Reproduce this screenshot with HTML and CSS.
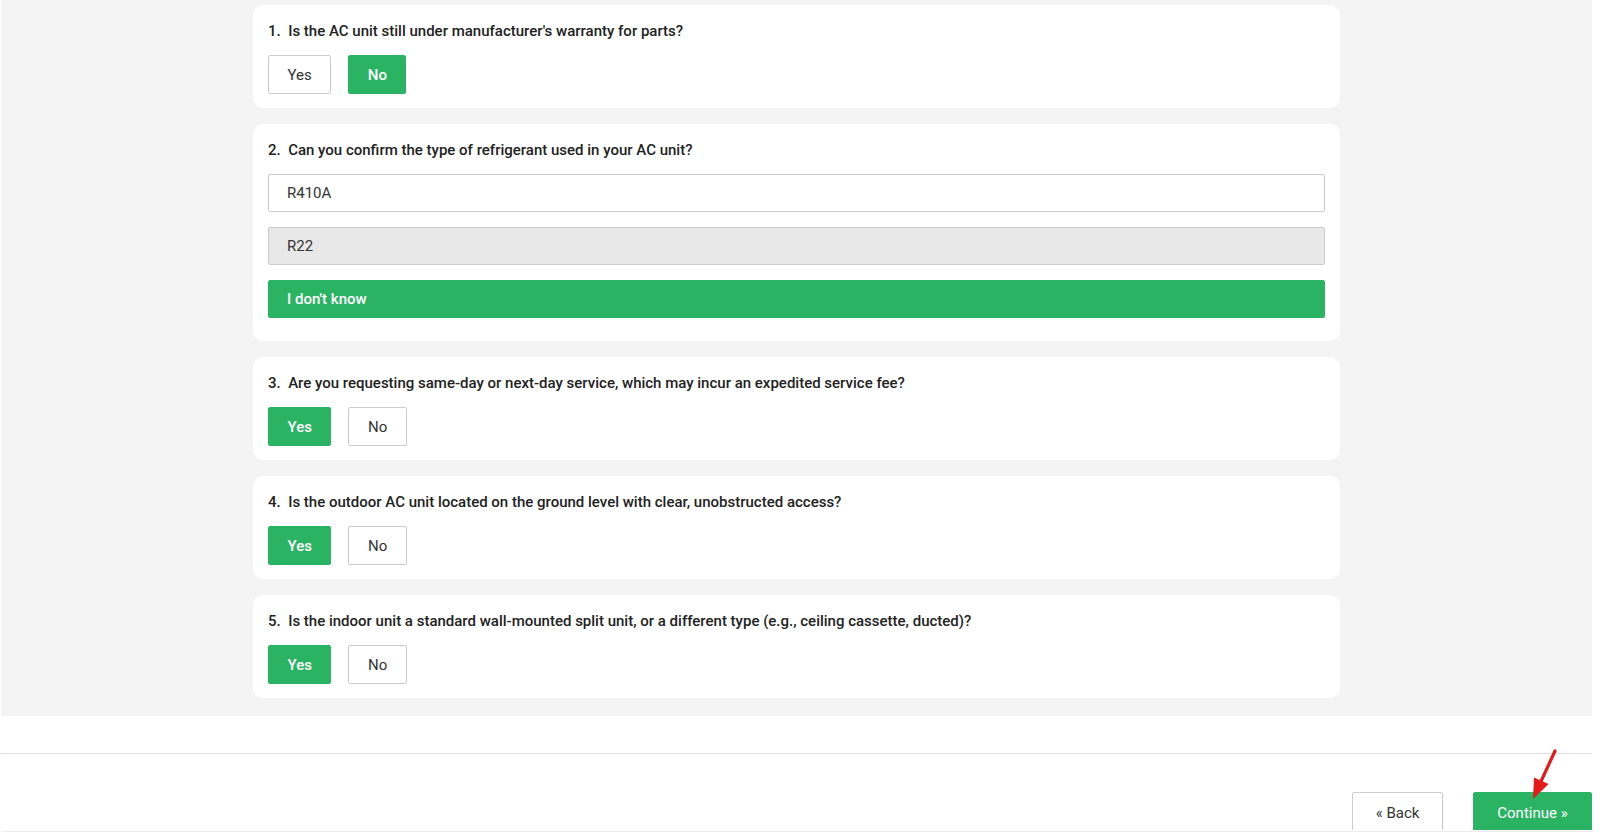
FILE: index.html
```html
<!DOCTYPE html>
<html lang="en">
<head>
<meta charset="utf-8">
<title>Service questions</title>
<link rel="stylesheet" href="styles.css">
</head>
<body>
<div class="page">
  <main class="main">
    <div class="stack">
      <section class="card">
        <div class="q">1.&nbsp; Is the AC unit still under manufacturer's warranty for parts?</div>
        <div class="choices">
          <button class="btn">Yes</button>
          <button class="btn on">No</button>
        </div>
      </section>
      <section class="card card-list">
        <div class="q">2.&nbsp; Can you confirm the type of refrigerant used in your AC unit?</div>
        <div class="options">
          <div class="opt">R410A</div>
          <div class="opt grey">R22</div>
          <div class="opt on">I don't know</div>
        </div>
      </section>
      <section class="card">
        <div class="q">3.&nbsp; Are you requesting same-day or next-day service, which may incur an expedited service fee?</div>
        <div class="choices">
          <button class="btn on">Yes</button>
          <button class="btn">No</button>
        </div>
      </section>
      <section class="card">
        <div class="q">4.&nbsp; Is the outdoor AC unit located on the ground level with clear, unobstructed access?</div>
        <div class="choices">
          <button class="btn on">Yes</button>
          <button class="btn">No</button>
        </div>
      </section>
      <section class="card">
        <div class="q">5.&nbsp; Is the indoor unit a standard wall-mounted split unit, or a different type (e.g., ceiling cassette, ducted)?</div>
        <div class="choices">
          <button class="btn on">Yes</button>
          <button class="btn">No</button>
        </div>
      </section>
    </div>
  </main>
  <footer class="footer">
    <div class="nav">
      <button class="nav-btn back">« Back</button>
      <button class="nav-btn next">Continue »</button>
    </div>
  </footer>
</div>
<svg class="arrow" width="40" height="60" viewBox="0 0 40 60">
  <line x1="30" y1="6" x2="15.5" y2="37.5" stroke="#e31b1b" stroke-width="3.2" stroke-linecap="round"/>
  <polygon points="8,54 23.6,39.1 9,32.5" fill="#e31b1b"/>
</svg>
</body>
</html>
```
FILE: styles.css
```css
html, body {
  margin: 0;
  padding: 0;
  overflow: hidden;
  background: #fff;
  font-family: Roboto, "Liberation Sans", Arial, sans-serif;
}

.page {
  margin-left: 1px;
  width: 1591px;
  height: 831px;
  border-bottom: 1px solid #ededed;
  overflow: hidden;
}

.main {
  background: #f4f4f4;
  padding: 5px 0 18px;
}

.stack {
  width: 1087px;
  margin: 0 auto;
  display: flex;
  flex-direction: column;
  gap: 16px;
}

.card {
  background: #fff;
  border-radius: 10px;
  padding: 15px 15px 14px;
}

.card-list {
  padding-bottom: 23px;
}

.q {
  font-size: 15px;
  line-height: 20px;
  font-weight: 500;
  color: #222;
  margin-bottom: 15px;
  padding-top: 1px;
  height: 19px;
}

.choices {
  display: flex;
  gap: 17px;
}

.btn {
  height: 39px;
  box-sizing: border-box;
  padding: 0 18.5px;
  border: 1px solid #cccccc;
  border-radius: 2px;
  background: #fff;
  font-family: inherit;
  font-size: 15px;
  font-weight: 400;
  color: #333;
}

.btn.on {
  background: #2bb364;
  border-color: #2bb364;
  color: #fff;
  font-weight: 500;
}

.options {
  display: flex;
  flex-direction: column;
  gap: 15px;
}

.opt {
  height: 38px;
  box-sizing: border-box;
  border: 1px solid #cccccc;
  border-radius: 2px;
  padding: 0 18px;
  display: flex;
  align-items: center;
  font-size: 15px;
  color: #333;
  background: #fff;
}

.opt.grey {
  background: #e8e8e8;
}

.opt.on {
  background: #2bb364;
  border-color: #2bb364;
  color: #fff;
  font-weight: 500;
}

.footer {
  margin-top: 37px;
  border-top: 1px solid #dcdcdc;
  height: 76px;
  overflow: hidden;
}

.nav {
  display: flex;
  justify-content: flex-end;
  gap: 30px;
  padding-top: 38px;
}

.nav-btn {
  height: 44px;
  box-sizing: border-box;
  border: 1px solid #cccccc;
  border-radius: 2px;
  background: #fff;
  font-family: inherit;
  font-size: 15px;
  color: #333;
  padding: 0 0 2px;
}

.back {
  width: 91px;
}

.next {
  width: 119px;
  background: #2bb364;
  border-color: #2bb364;
  color: #fff;
}

.arrow {
  position: absolute;
  left: 1525px;
  top: 745px;
}
```
